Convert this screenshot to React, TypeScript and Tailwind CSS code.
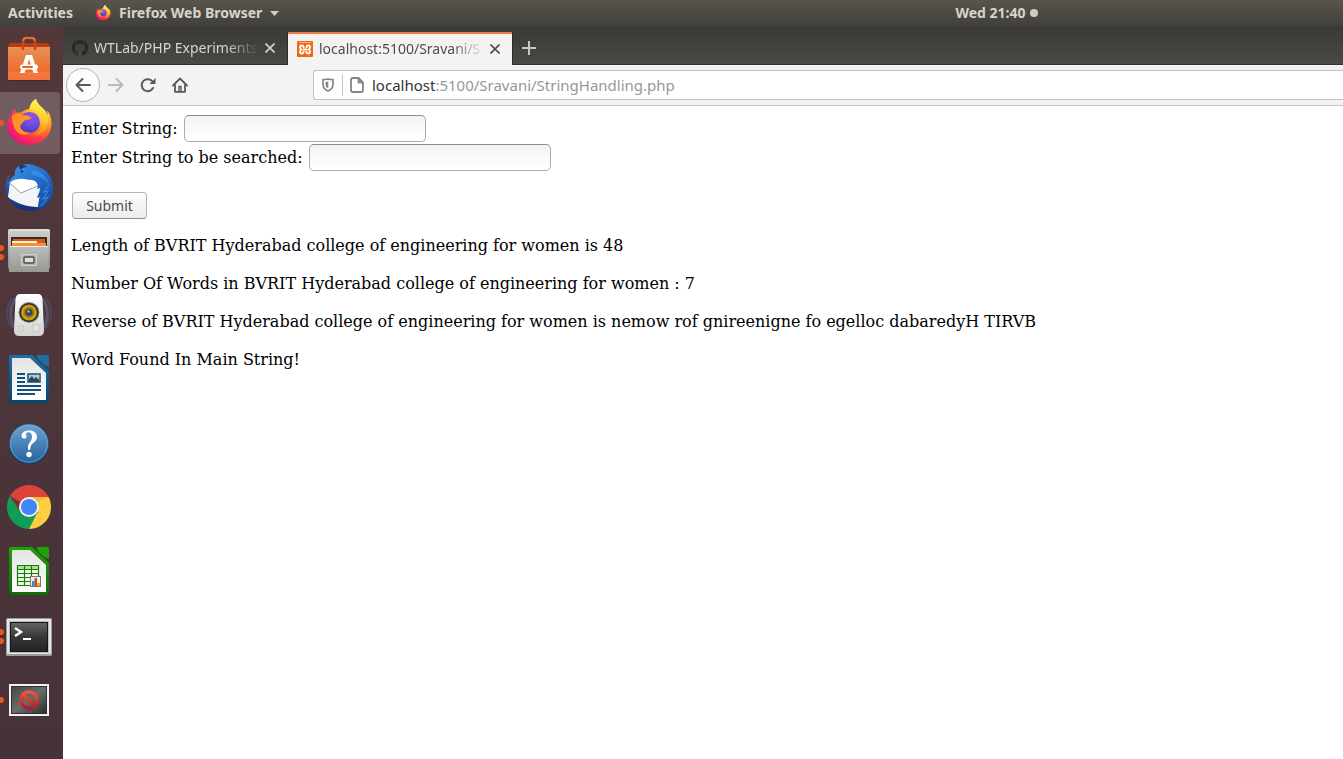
import type { ReactNode } from "react";

function FirefoxLogo({ className, id }: { className: string; id: string }) {
  return (
    <svg viewBox="0 0 48 48" className={className} aria-hidden="true">
      <defs>
        <radialGradient id={id + "-body"} cx="0.82" cy="0.15" r="1">
          <stop offset="0" stopColor="#fff44f" />
          <stop offset="0.3" stopColor="#ffc02e" />
          <stop offset="0.5" stopColor="#ff8a1e" />
          <stop offset="0.72" stopColor="#ff3a4a" />
          <stop offset="1" stopColor="#e0107e" />
        </radialGradient>
        <radialGradient id={id + "-globe"} cx="0.6" cy="0.2" r="0.9">
          <stop offset="0" stopColor="#a04af0" />
          <stop offset="0.5" stopColor="#6a50dc" />
          <stop offset="1" stopColor="#4a2fa8" />
        </radialGradient>
        <linearGradient id={id + "-flame"} x1="0" y1="0" x2="0" y2="1">
          <stop offset="0" stopColor="#fff44f" />
          <stop offset="0.6" stopColor="#ffc930" />
          <stop offset="1" stopColor="#ff8a1e" />
        </linearGradient>
      </defs>
      <path
        d="M10 10 C8 11 7 13 6.500 16 C3 19 1.500 24 2 28 C3 38 12 46 24 46 C37 46 46 37 46.500 25 C46.700 19 44.500 14 42 11.500 C42.500 13.500 42.800 15 42.500 16 C40.500 9.500 33 8 31 0 C27 2 25 7 24.500 10 C21.500 10 18.500 11.500 16.500 13.500 C14 13 12 14 11.500 13.500 C10.500 13 10 11.500 10 10 Z"
        fill={`url(#${id}-body)`}
      />
      <path
        d="M31 0 C27 2 24.500 6 24.500 11 C31 11 37 16 37 24 C37 30 34 34 29 35.500 C38 36 44 29 43 19 C42 9 33 8 31 0 Z"
        fill={`url(#${id}-flame)`}
      />
      <circle cx="24.500" cy="23.500" r="10.500" fill={`url(#${id}-globe)`} />
      <path
        d="M7 17 C10 14 15 14 18 16.500 C21 15.500 25 17 26.500 19 C25 21 20 20.500 18.500 22.500 C17 24 16.500 25.500 15 27 C15.500 31 20 34 25 33.500 C21 37.500 13 36 10 30 C8 26 7 21 7 17 Z"
        fill="#ff9226"
      />
    </svg>
  );
}

function SoftwareIcon() {
  return (
    <svg viewBox="0 0 48 48" className="size-12" aria-hidden="true">
      <defs>
        <linearGradient id="bag" x1="0" y1="0" x2="0" y2="1">
          <stop offset="0" stopColor="#e79158" />
          <stop offset="0.75" stopColor="#ee6c2c" />
          <stop offset="0.76" stopColor="#f47a44" />
          <stop offset="1" stopColor="#f4713a" />
        </linearGradient>
      </defs>
      <rect x="4" y="43" width="40" height="2" fill="#2b1a1d" opacity="0.5" />
      <path d="M5 7 H43 L45 11 H3 Z" fill="#b83c11" />
      <rect x="3" y="11" width="42" height="33" fill="url(#bag)" />
      <path d="M18 14 V5 Q18 2 21 2 H27 Q30 2 30 5 V14" fill="none" stroke="#c8441c" strokeWidth="2.400" />
      <path d="M18.500 5 Q18.500 2 21 2 H27 Q29.500 2 29.500 5" fill="none" stroke="#f07a48" strokeWidth="1.500" />
      <path d="M21 19 H27 L33 37 H28.500 L24 23 L19.500 37 H15 Z" fill="#fff" />
      <rect x="15" y="28.500" width="18" height="5" rx="2.500" fill="#fff" />
      <rect x="17" y="30" width="11" height="2" rx="1" fill="#e96425" />
    </svg>
  );
}

function ThunderbirdIcon() {
  return (
    <svg viewBox="0 0 48 48" className="size-12" aria-hidden="true">
      <defs>
        <linearGradient id="bird" x1="0" y1="0" x2="1" y2="1">
          <stop offset="0" stopColor="#3d97ea" />
          <stop offset="0.5" stopColor="#2270cc" />
          <stop offset="1" stopColor="#163f94" />
        </linearGradient>
        <linearGradient id="tail" x1="0" y1="0" x2="0" y2="1">
          <stop offset="0" stopColor="#2f76cc" />
          <stop offset="1" stopColor="#182c78" />
        </linearGradient>
      </defs>
      <path
        d="M5 9 C0 16 -1 25 2 32 C6 42 15 47 25 47 C39 47 48 38 48 24 C48 13 41 5 33 3 C28 0 21 -1 16 2 C12 4 10 7 10 11 C7 13 5 16 4 19 C3 16 4 12 5 9 Z"
        fill="url(#tail)"
      />
      <path d="M5 18 L14 13 L32 13 L37 20 L33 43 C22 43 10 39 3 33 Z" fill="#f3f4f7" />
      <path d="M4 18 L16 29 L35 21 L30 12 L13 12 Z" fill="#fff" />
      <path d="M4.500 19 L16 29 L35 21" fill="none" stroke="#8c95a3" strokeWidth="0.900" />
      <path
        d="M10 11 C9 6 12 2 17 1 C22 -1 29 1 33 3 C42 6 48 14 48 24 C48 35 42 42 33 45 C34 40 33 37 35 33 L32 34 C33 30 35 28 35 24 L32 25 C34 21 32 17 27 16 C22 16 19 14 14 15 C9 15 6 18 3 20 C4 16 7 13 10 11 Z"
        fill="url(#bird)"
      />
      <path d="M14 2 C17 0 21 1 22 3 C19 3 17 4 15 6 Z" fill="#26366f" />
      <path d="M26 6 C35 6 42 12 44 20 C38 14 33 12 27 11" fill="#4aa0ec" opacity="0.5" />
      <path d="M44 21 L39 28 L43 27 L38 35 L43 33 L36 42" fill="none" stroke="#3b84d8" strokeWidth="1.200" />
      <circle cx="17" cy="7.500" r="1.100" fill="#10235f" />
    </svg>
  );
}

function FilesIcon() {
  return (
    <svg viewBox="0 0 48 48" className="size-12" aria-hidden="true">
      <defs>
        <linearGradient id="cabinet" x1="0" y1="0" x2="0" y2="1">
          <stop offset="0" stopColor="#d2d2cf" />
          <stop offset="1" stopColor="#888884" />
        </linearGradient>
        <linearGradient id="drawer" x1="0" y1="0" x2="0" y2="1">
          <stop offset="0" stopColor="#bdbdba" />
          <stop offset="1" stopColor="#979794" />
        </linearGradient>
      </defs>
      <rect x="3" y="1" width="42" height="40" rx="1.500" fill="url(#cabinet)" />
      <path d="M4 2 H44" stroke="#e7e7e5" />
      <rect x="6" y="9" width="36" height="10" fill="#3a2b25" />
      <rect x="8" y="11" width="32" height="7" fill="#d45a1b" />
      <rect x="7" y="13" width="25" height="2" fill="#fff3cd" />
      <rect x="7" y="15" width="34" height="4" fill="#f3903d" />
      <path d="M5 18 H43 L44 44 H4 Z" fill="url(#drawer)" />
      <path d="M5 18.500 H43" stroke="#efefed" />
      <rect x="16.500" y="26.500" width="15" height="11" fill="#b4b4b1" stroke="#d0d0ce" />
      <rect x="19" y="29" width="10" height="6" rx="1" fill="#deddd9" stroke="#4c4c4a" strokeWidth="1.400" />
    </svg>
  );
}

function RhythmboxIcon() {
  return (
    <svg viewBox="0 0 48 48" className="size-12" aria-hidden="true">
      <defs>
        <linearGradient id="speaker" x1="0" y1="0" x2="0" y2="1">
          <stop offset="0" stopColor="#fff" />
          <stop offset="1" stopColor="#d3d4d1" />
        </linearGradient>
      </defs>
      <g fill="none" stroke="#5d6f9c">
        <path d="M7 6 Q-3 22 7 36 M41 6 Q51 22 41 36" strokeWidth="1.500" opacity="0.35" />
        <path d="M11 6 Q0 22 11 38 M37 6 Q48 22 37 38" strokeWidth="3" opacity="0.5" />
      </g>
      <path d="M15 2 H33 Q37 2 37.500 7 L39 38 Q39 44 34 44 H14 Q9 44 9 38 L10.500 7 Q11 2 15 2 Z" fill="url(#speaker)" />
      <circle cx="24" cy="20.500" r="10.500" fill="#8b8f8a" />
      <circle cx="24" cy="20.500" r="9.500" fill="#272622" />
      <circle cx="24" cy="20.500" r="8" fill="#c69b16" />
      <circle cx="24" cy="20.500" r="5" fill="#87700b" />
      <circle cx="24" cy="20.500" r="3.200" fill="#34435a" />
      <circle cx="23.500" cy="19.500" r="1.200" fill="#a2b8cd" />
      <circle cx="31" cy="36" r="4" fill="#e2e2e0" stroke="#bdbdba" strokeWidth="0.700" />
      <rect x="14" y="34" width="4.500" height="5" fill="none" stroke="#cacac7" />
    </svg>
  );
}

function DocumentShape({ id, light, dark, children }: { id: string; light: string; dark: string; children: ReactNode }) {
  return (
    <svg viewBox="0 0 48 48" className="size-12 overflow-visible" aria-hidden="true">
      <defs>
        <linearGradient id={id + "-frame"} x1="0" y1="0" x2="0" y2="1">
          <stop offset="0" stopColor={light} />
          <stop offset="1" stopColor={dark} />
        </linearGradient>
        <linearGradient id={id + "-paper"} x1="0" y1="0" x2="0" y2="1">
          <stop offset="0" stopColor="#e4e4e4" />
          <stop offset="1" stopColor="#fff" />
        </linearGradient>
      </defs>
      <path d="M6 -1 H27 L44 15 V45 Q44 47 42 47 H6 Q4 47 4 45 V1 Q4 -1 6 -1 Z" fill={`url(#${id}-frame)`} />
      <path d="M32 -1 H42 Q44 -1 44 1 V11 Q41 11 38 8 L33 3 Q31 0 32 -1 Z" fill={light} />
      <path d="M7 2 H25 L41 17 V44 H7 Z" fill={`url(#${id}-paper)`} />
      {children}
    </svg>
  );
}

function WriterIcon() {
  return (
    <DocumentShape id="writer" light="#1a6fa5" dark="#06456f">
      <g stroke="#10517d" strokeWidth="2">
        <path d="M12 18 H20 M12 22 H20 M12 26 H20 M12 30 H36 M12 34 H36 M12 38 H30" />
      </g>
      <rect x="23" y="18" width="12" height="8" fill="#9ed0ee" stroke="#10517d" strokeWidth="1.500" />
      <circle cx="33" cy="20" r="1.500" fill="#f1c84b" />
      <path d="M24 26 V23 L27 20 L29 23 L31 21 L34 24 V26 Z" fill="#31434d" />
    </DocumentShape>
  );
}

function CalcIcon() {
  return (
    <DocumentShape id="calc" light="#1ca303" dark="#106b04">
      <rect x="13" y="18" width="20" height="19" fill="#f0fbec" />
      <rect x="13" y="18" width="20" height="3" fill="#a9e096" />
      <path d="M12.500 17.500 H33.500 V37.500 H12.500 Z M12.500 21.500 H33.500 M12.500 25.500 H33.500 M12.500 29.500 H33.500 M12.500 33.500 H33.500 M19.500 17.500 V37.500 M26.500 17.500 V37.500" fill="none" stroke="#157a06" strokeWidth="1.200" />
      <rect x="25.500" y="28.500" width="10" height="10" fill="#eee" stroke="#777" />
      <rect x="27" y="33" width="2.500" height="5" fill="#2196d6" />
      <rect x="29.500" y="30" width="2.500" height="8" fill="#d3421d" />
      <rect x="32" y="35" width="3" height="3" fill="#e3ac25" />
    </DocumentShape>
  );
}

function HelpIcon() {
  return (
    <svg viewBox="0 0 48 48" className="size-12" aria-hidden="true">
      <defs>
        <linearGradient id="help" x1="0" y1="0" x2="0" y2="1">
          <stop offset="0" stopColor="#6fa3d2" />
          <stop offset="1" stopColor="#25629e" />
        </linearGradient>
      </defs>
      <circle cx="24" cy="24.500" r="20" fill="#24384f" />
      <circle cx="24" cy="23.500" r="19.500" fill="url(#help)" stroke="#1f578c" />
      <circle cx="24" cy="23.500" r="18.500" fill="none" stroke="#8db8df" strokeWidth="0.800" opacity="0.7" />
      <path
        d="M16.500 15.500 C17 12 20 10.500 24 10.500 C29 10.500 32 13 32 17 C32 22 26.500 22.500 25.500 27 L25 30 H23.200 L23 27 C23 22.500 27 21.500 27 17 C27 14 25.700 12.200 23.500 12.200 C21.800 12.200 21 13 21 14 C21 15 21.600 15.500 21.500 16.800 C21.300 18.200 20.200 18.800 19 18.600 C17.300 18.400 16.300 17.200 16.500 15.500 Z"
        fill="#fff"
      />
      <circle cx="24" cy="34.500" r="2.700" fill="#fff" />
    </svg>
  );
}

function ChromeIcon() {
  return (
    <svg viewBox="0 0 48 48" className="size-12" aria-hidden="true">
      <path d="M24 23 L4.950 12 A22 22 0 0 1 43.050 12 L45 17 H24 Z" fill="#db4437" />
      <path d="M24 13 H43.600 A22 22 0 0 1 24 45 L22 43 L33 28 Z" fill="#ffcd40" />
      <path d="M4.950 12 A22 22 0 0 0 24 45 L32.660 28 L24 33 L15.340 28 Z" fill="#0f9d58" />
      <path d="M24 13 H43.600 L32 18 Z" fill="#e2a33c" opacity="0.5" />
      <path d="M5 12 L15 28 L17 20 Z" fill="#a93029" opacity="0.5" />
      <circle cx="24" cy="23" r="10" fill="#f1f1f1" />
      <circle cx="24" cy="23" r="8" fill="#4285f4" />
    </svg>
  );
}

function TerminalIcon() {
  return (
    <svg viewBox="0 0 48 48" className="size-12" aria-hidden="true">
      <defs>
        <linearGradient id="screen" x1="0" y1="0" x2="0" y2="1">
          <stop offset="0" stopColor="#626461" />
          <stop offset="0.5" stopColor="#353735" />
          <stop offset="1" stopColor="#232524" />
        </linearGradient>
      </defs>
      <rect x="1" y="6" width="46" height="38" rx="1.500" fill="#9c9d9b" />
      <rect x="2" y="7" width="44" height="35" rx="1" fill="#e6e6e4" />
      <rect x="4" y="9" width="40" height="32" fill="#bcbdbb" />
      <rect x="5" y="10" width="38" height="30" fill="#161716" />
      <rect x="6" y="11" width="36" height="28" fill="url(#screen)" />
      <path d="M10 16 L16 20 L10 24" fill="none" stroke="#fff" strokeWidth="2.400" />
      <rect x="18" y="26" width="8" height="2" fill="#fff" />
    </svg>
  );
}

function BlockedIcon() {
  return (
    <svg viewBox="0 0 48 48" className="size-12" aria-hidden="true">
      <defs>
        <linearGradient id="panel" x1="0" y1="0" x2="1" y2="1">
          <stop offset="0" stopColor="#464846" />
          <stop offset="0.5" stopColor="#6a6c6a" />
          <stop offset="1" stopColor="#2b2d2c" />
        </linearGradient>
        <linearGradient id="ban" gradientUnits="userSpaceOnUse" x1="24" y1="14" x2="24" y2="34">
          <stop offset="0" stopColor="#ea6247" />
          <stop offset="0.5" stopColor="#da3a2c" />
          <stop offset="1" stopColor="#a91432" />
        </linearGradient>
      </defs>
      <rect x="4" y="8" width="40" height="32" fill="#f2f2f1" />
      <rect x="6.500" y="10.500" width="35" height="27" fill="url(#panel)" stroke="#303130" />
      <circle cx="24" cy="24" r="8" fill="none" stroke="url(#ban)" strokeWidth="3.600" />
      <path d="M18.300 18.300 L29.700 29.700" stroke="url(#ban)" strokeWidth="3.600" />
    </svg>
  );
}

const apps: { name: string; icon: ReactNode; windows: number; active?: boolean }[] = [
  { name: "Ubuntu Software", icon: <SoftwareIcon />, windows: 0 },
  { name: "Firefox Web Browser", icon: <FirefoxLogo id="dock" className="size-12" />, windows: 1, active: true },
  { name: "Thunderbird Mail", icon: <ThunderbirdIcon />, windows: 0 },
  { name: "Files", icon: <FilesIcon />, windows: 2 },
  { name: "Rhythmbox", icon: <RhythmboxIcon />, windows: 0 },
  { name: "LibreOffice Writer", icon: <WriterIcon />, windows: 0 },
  { name: "Help", icon: <HelpIcon />, windows: 0 },
  { name: "Google Chrome", icon: <ChromeIcon />, windows: 0 },
  { name: "LibreOffice Calc", icon: <CalcIcon />, windows: 0 },
  { name: "Terminal", icon: <TerminalIcon />, windows: 2 },
  { name: "Screenshot", icon: <BlockedIcon />, windows: 1 },
];

function TopPanel() {
  return (
    <header className="grid h-[27px] grid-cols-[1fr_auto_1fr] items-center bg-linear-to-b from-[#59554c] to-[#403f3a] pb-px text-sm font-bold text-[#d8d4cc]">
      <div className="flex items-center gap-[22px] pl-2">
        <button type="button">Activities</button>
        <button type="button" className="flex items-center gap-2">
          <FirefoxLogo id="menu" className="size-4" />
          Firefox Web Browser
          <svg viewBox="0 0 9 5" className="h-[5px] w-[9px]" aria-hidden="true">
            <path d="M0 0 H9 L4.500 5 Z" fill="#d0cdc6" />
          </svg>
        </button>
      </div>
      <button type="button" className="ml-[650px] flex items-center gap-1">
        Wed 21:40
        <span className="size-2 rounded-full bg-[#cfccc6]" />
      </button>
    </header>
  );
}

function Dock() {
  return (
    <nav aria-label="Applications" className="w-[63px] shrink-0 bg-linear-to-b from-[#53383b] to-[#463238] pt-px">
      {apps.map((app) => (
        <div key={app.name} className={app.active ? "flex h-16 items-start" : "flex h-16 items-center"}>
          <button
            type="button"
            aria-label={app.name}
            className={
              app.active
                ? "relative flex h-[62px] w-[60px] items-center rounded-r-[4px] bg-[#715c60] pl-[5px]"
                : "relative flex h-[62px] w-[60px] items-center pl-[5px]"
            }
          >
            {app.icon}
            <span className="absolute top-0 -left-[2px] flex h-full flex-col items-center justify-center gap-[3px]">
              {Array.from({ length: app.windows }, (_, i) => (
                <span key={i} className="size-[6px] rounded-full bg-[#e95420]" />
              ))}
            </span>
          </button>
        </div>
      ))}
    </nav>
  );
}

function CloseIcon() {
  return (
    <svg viewBox="0 0 10 10" className="size-[10px]" aria-hidden="true">
      <path d="M0.500 0.500 L9.500 9.500 M9.500 0.500 L0.500 9.500" stroke="currentColor" strokeWidth="1.600" />
    </svg>
  );
}

function TabBar() {
  return (
    <div className="flex h-[38px] items-end border-b border-[#33322e] bg-linear-to-b from-[#3a3935] to-[#4b4943] text-sm">
      <div className="flex h-8 w-[225px] items-center border-r border-[#2c2b28] pr-3 pl-[9px] text-[#d8d5cd]">
        <svg viewBox="0 0 16 16" className="size-4 shrink-0" aria-hidden="true">
          <path
            fill="#24292e"
            d="M8 0C3.580 0 0 3.580 0 8c0 3.540 2.290 6.530 5.470 7.590.4.070.55-.17.55-.38 0-.19-.01-.82-.01-1.490-2.010.37-2.530-.49-2.690-.94-.09-.23-.48-.94-.82-1.130-.28-.15-.68-.52-.01-.53.63-.01 1.080.58 1.230.82.72 1.210 1.870.87 2.330.66.07-.52.28-.87.51-1.070-1.780-.2-3.640-.89-3.640-3.950 0-.87.31-1.590.82-2.150-.08-.2-.36-1.020.08-2.120 0 0 .67-.21 2.200.82.64-.18 1.320-.27 2-.27s1.360.09 2 .27c1.530-1.040 2.200-.82 2.200-.82.44 1.100.16 1.920.08 2.120.51.56.82 1.270.82 2.150 0 3.070-1.870 3.750-3.650 3.950.29.25.54.73.54 1.480 0 1.070-.01 1.930-.01 2.200 0 .21.15.46.55.38A8.010 8.010 0 0 0 16 8c0-4.420-3.580-8-8-8z"
          />
        </svg>
        <span className="ml-[6px] min-w-0 flex-1 overflow-hidden mask-r-from-80% mask-r-to-100% whitespace-nowrap">WTLab/PHP Experiments</span>
        <button type="button" aria-label="Close WTLab tab" className="ml-[6px]">
          <CloseIcon />
        </button>
      </div>
      <div className="-mb-px flex h-[33px] w-[224px] items-center border-t-2 border-[#f07746] bg-[#f4f3f2] pr-3 pb-[2px] pl-[9px] text-[#4c4c4c]">
        <svg viewBox="0 0 16 16" className="size-4 shrink-0" aria-hidden="true">
          <rect width="16" height="16" rx="1" fill="#ed6b11" />
          <path d="M2 1.500 H14" stroke="#f8b27c" />
          <path
            d="M6.500 7 V5.800 A1.800 1.800 0 0 0 3 5.800 C3 7.300 3.500 8 4.300 8.500 C3.500 9 3 9.700 3 11.200 A1.800 1.800 0 0 0 6.500 11.200 V10 M9.500 7 V5.800 A1.800 1.800 0 0 1 13 5.800 C13 7.300 12.500 8 11.700 8.500 C12.500 9 13 9.700 13 11.200 A1.800 1.800 0 0 1 9.500 11.200 V10 M6 8.500 H10"
            fill="none"
            stroke="#fff"
            strokeWidth="1.900"
          />
        </svg>
        <span className="ml-[6px] min-w-0 flex-1 overflow-hidden mask-r-from-80% mask-r-to-100% whitespace-nowrap">localhost:5100/Sravani/S</span>
        <button type="button" aria-label="Close localhost tab" className="ml-[6px]">
          <CloseIcon />
        </button>
      </div>
      <button type="button" aria-label="New tab" className="flex h-8 items-center border-l border-[#2c2b28] pl-[9px] text-[#cac7be]">
        <svg viewBox="0 0 14 14" className="size-[14px]" aria-hidden="true">
          <path d="M7 0 V14 M0 7 H14" stroke="currentColor" strokeWidth="2" />
        </svg>
      </button>
    </div>
  );
}

function Toolbar() {
  return (
    <div className="flex h-[41px] items-center border-b border-[#c6c5c3] bg-[#f4f3f2] pl-[3px] text-[#5a5a5a]">
      <button type="button" aria-label="Back" className="flex size-[34px] items-center justify-center rounded-full border border-[#b5b4b2] bg-[#fcfcfc]">
        <svg viewBox="0 0 16 16" className="size-4" fill="none" stroke="currentColor" strokeWidth="2" strokeLinecap="round" strokeLinejoin="round" aria-hidden="true">
          <path d="M15 8 H1.500 M7.500 2 L1.500 8 L7.500 14" />
        </svg>
      </button>
      <button type="button" aria-label="Forward" disabled className="ml-2 text-[#bab9b7]">
        <svg viewBox="0 0 16 16" className="size-4" fill="none" stroke="currentColor" strokeWidth="2" strokeLinecap="round" strokeLinejoin="round" aria-hidden="true">
          <path d="M1 8 H14.500 M8.500 2 L14.500 8 L8.500 14" />
        </svg>
      </button>
      <button type="button" aria-label="Reload" className="ml-4">
        <svg viewBox="0 0 16 16" className="size-4" aria-hidden="true">
          <path d="M13 11 A6 6 0 1 1 12.500 4.500" fill="none" stroke="currentColor" strokeWidth="2" strokeLinecap="round" />
          <path d="M15.500 1 V7 H9.500 Z" fill="currentColor" />
        </svg>
      </button>
      <button type="button" aria-label="Home" className="ml-4">
        <svg viewBox="0 0 16 16" className="size-4" fill="none" stroke="currentColor" strokeWidth="1.800" strokeLinecap="round" strokeLinejoin="round" aria-hidden="true">
          <path d="M1 8.500 L8 1.500 L15 8.500 M3 8 V14.800 H13 V8" />
          <path d="M7 14 V9.500 H9 V14" strokeWidth="1.400" />
        </svg>
      </button>
      <div className="ml-[125px] flex h-[30px] flex-1 items-center rounded-l-[3px] border border-r-0 border-[#c3c1be] bg-white text-[#858585]">
        <svg viewBox="0 0 12 14" className="ml-2 h-[14px] w-3" aria-hidden="true">
          <path d="M6 1 C8 1.500 9.500 1.700 11 1.700 V6 C11 10 9 12 6 13 C3 12 1 10 1 6 V1.700 C2.500 1.700 4 1.500 6 1 Z" fill="none" stroke="currentColor" strokeWidth="1.700" />
          <path d="M6.300 3.500 V10.500 C4.300 9.500 3.500 8 3.500 6 V4 Z" fill="currentColor" />
        </svg>
        <span className="ml-2 h-[22px] w-px bg-[#c5c5c5]" />
        <svg viewBox="0 0 14 16" className="ml-[7px] h-4 w-[14px]" aria-hidden="true">
          <path d="M3 1 H8.500 L13 5.500 V13 Q13 15 11 15 H3 Q1 15 1 13 V3 Q1 1 3 1 Z M8.500 1 V5.500 H13" fill="none" stroke="currentColor" strokeWidth="1.800" strokeLinejoin="round" />
        </svg>
        <a href="#" className="ml-2 text-[15px] text-[#979797]">
          <span className="text-[#333]">localhost</span>:5100/Sravani/StringHandling.php
        </a>
      </div>
    </div>
  );
}

const fieldClass =
  "ml-[6px] h-[27px] w-[242px] rounded-[5px] border border-[#acaba9] border-t-[#8d8c8a] bg-linear-to-b from-[#f3f3f3] to-white px-2";

function Page() {
  return (
    <main className="flex-1 bg-white px-2 pt-2 font-['DejaVu_Serif',serif] text-base leading-[22px] text-black">
      <form onSubmit={(e) => e.preventDefault()}>
        <div className="flex h-[29px] items-center">
          <label htmlFor="main-string">Enter String:</label>
          <input id="main-string" type="text" className={fieldClass} />
        </div>
        <div className="flex h-[29px] items-center">
          <label htmlFor="search-string">Enter String to be searched:</label>
          <input id="search-string" type="text" className={fieldClass} />
        </div>
        <button
          type="submit"
          className="mt-5 ml-px block h-[27px] w-[75px] rounded-[4px] border border-[#b3b2b0] border-b-[#908f8d] bg-linear-to-b from-[#fdfdfd] to-[#ececeb] font-['Noto_Sans',sans-serif] text-sm leading-6 text-[#4c4c4c]"
        >
          Submit
        </button>
      </form>
      <div className="mt-4 flex flex-col gap-4">
        <p>Length of BVRIT Hyderabad college of engineering for women is 48</p>
        <p>Number Of Words in BVRIT Hyderabad college of engineering for women : 7</p>
        <p>Reverse of BVRIT Hyderabad college of engineering for women is nemow rof gnireenigne fo egelloc dabaredyH TIRVB</p>
        <p>Word Found In Main String!</p>
      </div>
    </main>
  );
}

export default function App() {
  return (
    <div className="flex min-h-screen flex-col font-['Noto_Sans',sans-serif]">
      <TopPanel />
      <div className="flex flex-1">
        <Dock />
        <div className="flex min-w-0 flex-1 flex-col">
          <TabBar />
          <Toolbar />
          <Page />
        </div>
      </div>
    </div>
  );
}
